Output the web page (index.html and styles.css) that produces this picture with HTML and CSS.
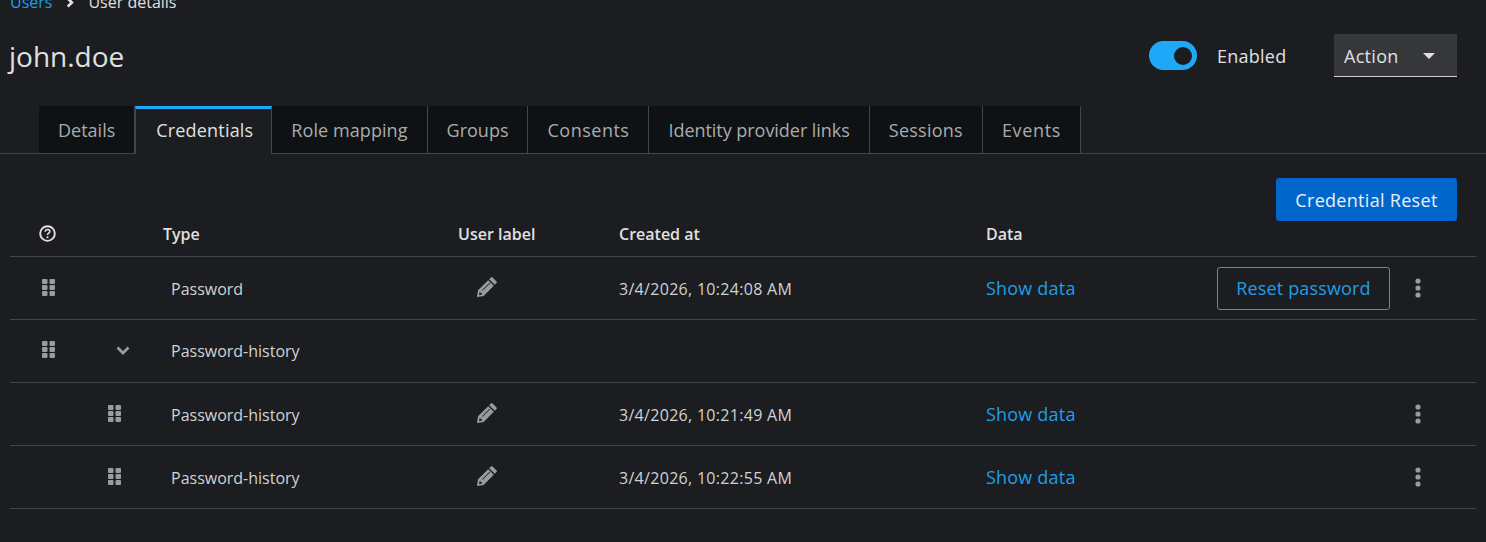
FILE: index.html
```html
<!DOCTYPE html>
<html lang="en">
<head>
<meta charset="utf-8">
<title>john.doe</title>
<link rel="stylesheet" href="styles.css">
</head>
<body>
<svg class="defs" width="0" height="0" aria-hidden="true">
  <symbol id="grip" viewBox="0 0 13 17"><g fill="currentColor"><rect x="0" y="0" width="5.500" height="5" rx="1"/><rect x="7.500" y="0" width="5.500" height="5" rx="1"/><rect x="0" y="6" width="5.500" height="5" rx="1"/><rect x="7.500" y="6" width="5.500" height="5" rx="1"/><rect x="0" y="12" width="5.500" height="5" rx="1"/><rect x="7.500" y="12" width="5.500" height="5" rx="1"/></g></symbol>
  <symbol id="pencil" viewBox="0 0 20 20"><path fill="currentColor" fill-rule="evenodd" d="M15.600 0.500l3.900 3.900c.5.5.5 1.200 0 1.700l-1.700 1.700-5.600-5.600 1.700-1.700c.5-.5 1.200-.5 1.700 0zM11.200 3.200l5.600 5.600L6.600 19 .6 20c-.4 0-.7-.3-.6-.7l1-6zM2.700 15l-.7 3 1 .1 2-.6-.3-1.600-1.600-.3zM5 13.200l.6.6 7.500-7.500-.6-.6z"/></symbol>
  <symbol id="kebab" viewBox="0 0 6 20"><g fill="currentColor"><circle cx="3" cy="3" r="2.600"/><circle cx="3" cy="10" r="2.600"/><circle cx="3" cy="17" r="2.600"/></g></symbol>
</svg>

<nav class="breadcrumb">
  <a class="link" href="#">Users</a>
  <svg class="crumb-sep" viewBox="0 0 8 12"><path d="M1.500 1.500 6 6l-4.500 4.500" fill="none" stroke="currentColor" stroke-width="3"/></svg>
  <span>User details</span>
</nav>

<header class="title-row">
  <h1>john.doe</h1>
  <div class="title-actions">
    <span class="switch"><span class="knob"></span></span>
    <span class="switch-label">Enabled</span>
    <button class="action" type="button">Action <span class="caret"></span></button>
  </div>
</header>

<div class="tabs">
  <a class="tab" href="#">Details</a>
  <a class="tab active" href="#">Credentials</a>
  <a class="tab" href="#">Role mapping</a>
  <a class="tab" href="#">Groups</a>
  <a class="tab" href="#">Consents</a>
  <a class="tab" href="#">Identity provider links</a>
  <a class="tab" href="#">Sessions</a>
  <a class="tab" href="#">Events</a>
</div>

<div class="toolbar"><button class="primary" type="button">Credential Reset</button></div>

<section class="table">
  <div class="row head">
    <span class="c-a"><svg class="help" viewBox="0 0 16 16"><circle cx="8" cy="8" r="6.900" fill="none" stroke="currentColor" stroke-width="1.800"/><path d="M5.900 6.300c0-1.300 1-2 2.200-2s2.100.8 2.100 1.900c0 1.500-2.200 1.500-2.200 3.100" fill="none" stroke="currentColor" stroke-width="1.500"/><circle cx="8" cy="11.500" r="1" fill="currentColor"/></svg></span>
    <span class="c-b"></span>
    <span class="c-type">Type</span>
    <span class="c-label">User label</span>
    <span class="c-date">Created at</span>
    <span class="c-data">Data</span>
    <span class="c-act"></span>
  </div>

  <div class="row">
    <span class="c-a"><svg class="grip"><use href="#grip"/></svg></span>
    <span class="c-b"></span>
    <span class="c-type cell">Password</span>
    <span class="c-label"><svg class="pencil"><use href="#pencil"/></svg></span>
    <span class="c-date cell">3/4/2026, 10:24:08 AM</span>
    <span class="c-data"><a class="link show" href="#">Show data</a></span>
    <span class="c-act"><button class="secondary" type="button">Reset password</button><svg class="kebab"><use href="#kebab"/></svg></span>
  </div>

  <div class="row group">
    <span class="c-a"><svg class="grip"><use href="#grip"/></svg></span>
    <span class="c-b"><svg class="chevron" viewBox="0 0 14 9"><path d="M1.500 1.500 7 7l5.500-5.500" fill="none" stroke="currentColor" stroke-width="2.800"/></svg></span>
    <span class="c-type cell">Password-history</span>
    <span class="c-label"></span>
    <span class="c-date"></span>
    <span class="c-data"></span>
    <span class="c-act"></span>
  </div>

  <div class="row">
    <span class="c-a"></span>
    <span class="c-b nested"><svg class="grip"><use href="#grip"/></svg></span>
    <span class="c-type cell">Password-history</span>
    <span class="c-label"><svg class="pencil"><use href="#pencil"/></svg></span>
    <span class="c-date cell">3/4/2026, 10:21:49 AM</span>
    <span class="c-data"><a class="link show" href="#">Show data</a></span>
    <span class="c-act"><svg class="kebab"><use href="#kebab"/></svg></span>
  </div>

  <div class="row">
    <span class="c-a"></span>
    <span class="c-b nested"><svg class="grip"><use href="#grip"/></svg></span>
    <span class="c-type cell">Password-history</span>
    <span class="c-label"><svg class="pencil"><use href="#pencil"/></svg></span>
    <span class="c-date cell">3/4/2026, 10:22:55 AM</span>
    <span class="c-data"><a class="link show" href="#">Show data</a></span>
    <span class="c-act"><svg class="kebab"><use href="#kebab"/></svg></span>
  </div>
</section>
</body>
</html>
```
FILE: styles.css
```css
* { box-sizing: border-box; }
html, body { margin: 0; height: 542px; overflow: hidden; }
body {
  background: #1b1d21;
  color: #e0e0e0;
  font-family: "Open Sans", "Noto Sans", sans-serif;
  font-size: 18px;
}
.defs { position: absolute; }
.link { color: #1f9ee8; text-decoration: none; }

.breadcrumb {
  height: 16px;
  margin-top: -6px;
  padding-left: 10px;
  display: flex;
  align-items: center;
  gap: 14px;
  font-size: 16px;
  line-height: 16px;
}
.crumb-sep { width: 8px; height: 11px; color: #e0e0e0; }

.title-row {
  height: 96px;
  padding: 0 29px 0 9px;
  display: flex;
  align-items: flex-start;
  justify-content: space-between;
}
h1 {
  margin: 28px 0 0;
  font-size: 28px;
  line-height: 36px;
  font-weight: 400;
}
.title-actions { display: flex; align-items: center; margin-top: 24px; }
.switch {
  width: 48px;
  height: 29px;
  border-radius: 15px;
  background: #1fa7f8;
  display: flex;
  align-items: center;
  justify-content: flex-end;
  padding-right: 5px;
}
.knob { width: 18px; height: 18px; border-radius: 50%; background: #1b1d21; }
.switch-label { margin-left: 20px; width: 117px; letter-spacing: .25px; }
.action {
  width: 123px;
  height: 43px;
  padding: 1px 10px 0;
  border: 0;
  border-bottom: 1px solid #d2d2d2;
  background: #36373b;
  color: #e0e0e0;
  font: inherit;
  letter-spacing: .3px;
  text-align: left;
  display: flex;
  align-items: center;
  gap: 24px;
}
.caret {
  width: 0;
  height: 0;
  border-left: 6px solid transparent;
  border-right: 6px solid transparent;
  border-top: 6px solid #e0e0e0;
}

.tabs {
  height: 48px;
  padding-left: 39px;
  display: flex;
  border-bottom: 1px solid #444548;
}
.tab {
  height: 47px;
  padding: 0 19px;
  display: flex;
  align-items: center;
  background: #0f1214;
  color: #aaabac;
  text-decoration: none;
  border-right: 1px solid #444548;
  white-space: nowrap;
}
.tab:nth-child(3) { letter-spacing: .08px; }
.tab:nth-child(5) { letter-spacing: .5px; }
.tab:nth-child(6) { letter-spacing: -.04px; }
.tab:nth-child(7) { letter-spacing: .25px; }
.tab:nth-child(8) { letter-spacing: .66px; }
.tab.active {
  height: 48px;
  margin-bottom: -1px;
  background: #1b1d21;
  color: #e0e0e0;
  border-top: 3px solid #1fa7f8;
  border-left: 1px solid #444548;
  letter-spacing: .18px;
  padding: 0 18px 3px 20px;
}

.toolbar {
  height: 24px;
  padding: 24px 29px 0 0;
  display: flex;
  justify-content: flex-end;
}
.primary {
  width: 181px;
  height: 43px;
  flex: none;
  border: 0;
  border-radius: 3px;
  background: #0066cc;
  color: #e8f0f8;
  font: inherit;
  letter-spacing: .3px;
  padding: 0;
}

.table { margin: 31px 10px 0; }
.row {
  height: 63px;
  display: grid;
  grid-template-columns: 75px 78px 295px 161px 367px 231px 259px;
  align-items: center;
  border-bottom: 1px solid #444548;
  font-size: 16px;
}
.row.head {
  height: 48px;
  font-weight: 600;
  padding-top: 3px;
}
.c-a { display: flex; justify-content: center; }
.c-a, .c-b, .c-act { height: 100%; align-items: center; }
.c-b { display: flex; justify-content: flex-end; padding-right: 33px; }
.c-b.nested { padding-right: 42px; }
.help { width: 17px; height: 17px; color: #e0e0e0; margin: -2px 1px 0 0; }
.grip { width: 13px; height: 17px; color: #9a9b9d; display: block; margin-top: -1px; margin-left: 1px; }
.chevron { width: 14px; height: 9px; color: #9a9b9d; display: block; margin-top: -1px; }
.cell { color: #d2d2d2; padding-top: 2px; }
.group .cell { padding-top: 0; }
.group .grip { margin-top: -3px; }
.c-type.cell { padding-left: 8px; }
.c-date.cell { letter-spacing: .3px; }
.pencil { width: 20px; height: 20px; color: #9a9b9d; display: block; margin: -2px 0 0 19px; }
.show { font-size: 18px; letter-spacing: .2px; }
.c-act { display: flex; justify-content: flex-end; padding-right: 55px; }
.secondary {
  width: 173px;
  height: 43px;
  margin: 0 25px 0 0;
  padding: 0;
  border: 1px solid #1f9ee8;
  border-radius: 3px;
  background: transparent;
  color: #1f9ee8;
  font: inherit;
  font-size: 18px;
  letter-spacing: .15px;
}
.kebab { width: 6px; height: 20px; color: #9a9b9d; display: block; margin-top: -1px; }
```
